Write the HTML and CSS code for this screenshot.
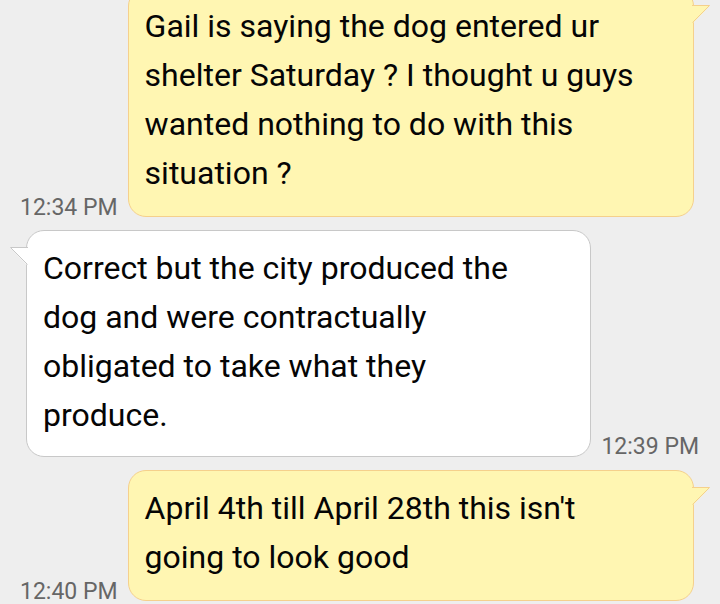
FILE: index.html
```html
<!DOCTYPE html>
<html lang="en">
<head>
    <meta charset="UTF-8">
    <meta name="viewport" content="width=device-width, initial-scale=1.0">
    <title>Messages</title>
    <link rel="stylesheet" href="styles.css">
</head>
<body>
    <div class="chat">
        <div class="row out">
            <span class="time">12:34 PM</span>
            <div class="bubble">
                Gail is saying the dog entered ur shelter Saturday ? I thought u guys wanted nothing to do with this situation ?
                <svg class="tail" width="19" height="19" viewBox="0 0 19 19">
                    <polygon points="0,0 18,0.5 1.5,17.5 0,17.5" class="tail-fill"/>
                    <polyline points="0,0.5 17.5,0.5 0.5,17.5" class="tail-line"/>
                </svg>
            </div>
        </div>

        <div class="row in">
            <div class="bubble">
                Correct but the city produced the dog and were contractually obligated to take what they produce.
                <svg class="tail" width="19" height="19" viewBox="0 0 19 19">
                    <polygon points="19,0 1,0.5 17.5,17.5 19,17.5" class="tail-fill"/>
                    <polyline points="19,0.5 1.5,0.5 18.5,17.5" class="tail-line"/>
                </svg>
            </div>
            <span class="time">12:39 PM</span>
        </div>

        <div class="row out">
            <span class="time">12:40 PM</span>
            <div class="bubble">
                April 4th till April 28th this isn't going to look good
                <svg class="tail" width="19" height="19" viewBox="0 0 19 19">
                    <polygon points="0,0 18,0.5 1.5,17.5 0,17.5" class="tail-fill"/>
                    <polyline points="0,0.5 17.5,0.5 0.5,17.5" class="tail-line"/>
                </svg>
            </div>
        </div>
    </div>
</body>
</html>
```

FILE: styles.css
```css
* {
    margin: 0;
    padding: 0;
    box-sizing: border-box;
}

body {
    background-color: #eeeeee;
    font-family: Roboto, "Liberation Sans", sans-serif;
    overflow: hidden;
}

.chat {
    display: flex;
    flex-direction: column;
    gap: 13px;
    margin-top: -12px;
}

.row {
    display: flex;
    align-items: flex-end;
    gap: 10px;
}
.row.out {
    padding: 0 26px 0 20px;
}
.row.in {
    padding: 0 21px 0 26px;
}

.time {
    flex: none;
    font-size: 23px;
    line-height: 26px;
    color: #666666;
    margin-bottom: -4px;
}
.in .time {
    margin-bottom: -3px;
}

.bubble {
    position: relative;
    flex: 1;
    padding: 13px 36px 16px 16px;
    font-size: 32px;
    line-height: 49px;
    color: #050505;
    border-radius: 18px;
}

.out .bubble {
    padding-bottom: 18px;
    background-color: #fff6b2;
    border: 1px solid #f5d08c;
}
.in .bubble {
    background-color: #ffffff;
    border: 1px solid #c8c8c8;
}

.tail {
    position: absolute;
    top: 16px;
    display: block;
}
.out .tail {
    right: -18px;
}
.in .tail {
    left: -18px;
}

.out .tail-fill {
    fill: #fff6b2;
}
.out .tail-line {
    fill: none;
    stroke: #f5d08c;
    stroke-width: 1;
}
.in .tail-fill {
    fill: #ffffff;
}
.in .tail-line {
    fill: none;
    stroke: #c8c8c8;
    stroke-width: 1;
}
```
